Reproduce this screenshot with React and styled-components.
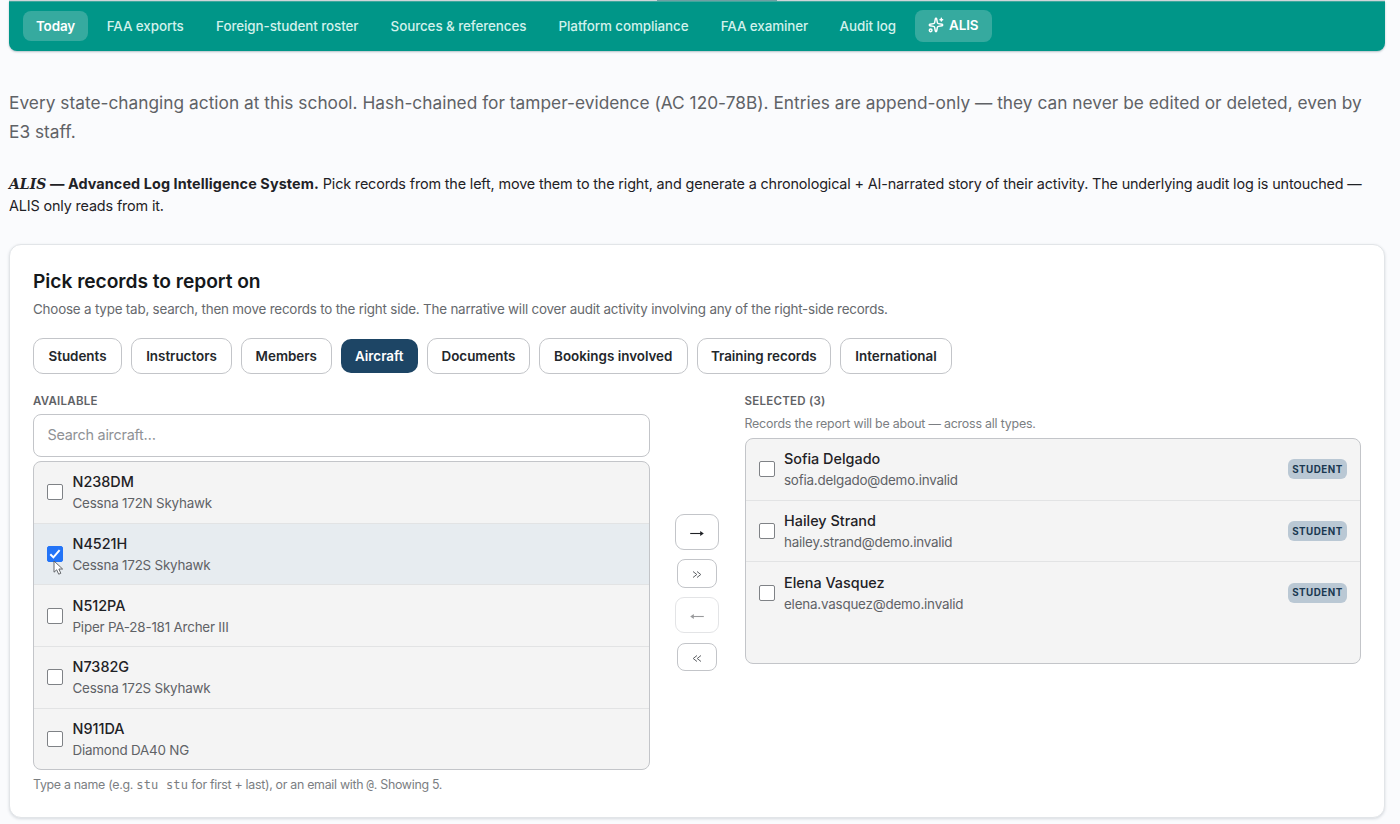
import styled, { createGlobalStyle } from "styled-components";

const GlobalStyle = createGlobalStyle`
  * {
    box-sizing: border-box;
  }

  body {
    margin: 0;
    height: 824px;
    overflow: hidden;
    background-color: #fafbfd;
    color: #1f2226;
    font-family: Inter, "Liberation Sans", sans-serif;
  }

  button,
  input {
    font-family: inherit;
  }
`;

const Page = styled.div`
  position: relative;
  width: 1400px;
  height: 824px;
  padding: 0 15px 0 9px;
`;
const TopLine = styled.div`
  height: 1px;
  background-color: #d3d9dc;
  display: flex;
  padding-left: 648px;
`;
const TopLineMark = styled.div`
  width: 120px;
  height: 1px;
  background-color: #6f9fa3;
`;
const Nav = styled.nav`
  height: 50px;
  display: flex;
  align-items: center;
  gap: 6px;
  padding: 0 14px 1px;
  background-color: #009688;
  border-radius: 0 0 8px 8px;
  border-top: 1px solid #3fa79d;
  box-shadow: 0 1px 2px rgba(20, 60, 80, 0.3);
`;
const NavItem = styled.a`
  width: ${(p) => p.$w}px;
  height: ${(p) => (p.$icon ? 32 : 30)}px;
  display: flex;
  align-items: center;
  justify-content: center;
  gap: 5px;
  padding-bottom: ${(p) => (p.$icon ? 3 : 1)}px;
  border-radius: 8px;
  font-size: 13.4px;
  font-weight: ${(p) => (p.$active ? 600 : 500)};
  letter-spacing: -0.08px;
  white-space: nowrap;
  color: ${(p) => (p.$active ? "#fff" : "#d2f1ec")};
  background-color: ${(p) => (p.$active ? "#36aa9f" : "transparent")};
`;
const Lead = styled.p`
  margin: 38px 0 0;
  font-size: 17.3px;
  line-height: 28.5px;
  color: #5f6266;
  white-space: nowrap;
  letter-spacing: 0.015px;
`;
const Intro = styled.p`
  margin: 27px 0 0;
  font-size: 14.4px;
  line-height: 22px;
  letter-spacing: -0.15px;
  white-space: nowrap;
`;
const IntroTitle = styled.strong`
  font-weight: 700;
  letter-spacing: 0.1px;
`;
const Brand = styled.em`
  font-family: "DejaVu Serif", serif;
  font-weight: 700;
  font-size: 14px;
  letter-spacing: 0;
`;
const Card = styled.section`
  margin-top: 27px;
  height: 574px;
  padding: 23px;
  background-color: #fff;
  border: 1px solid #e2e5e8;
  border-radius: 12px;
  box-shadow: 0 1px 3px rgba(30, 50, 70, 0.16);
`;
const CardTitle = styled.h2`
  margin: 0;
  font-size: 19.2px;
  line-height: 26px;
  font-weight: 600;
  color: #15181b;
  letter-spacing: -0.04px;
`;
const CardText = styled.p`
  margin: 5px 0 0;
  font-size: 13.4px;
  line-height: 20px;
  color: #66696d;
  letter-spacing: -0.2px;
`;
const Tabs = styled.div`
  display: flex;
  align-items: center;
  gap: 9px;
  height: 36px;
  margin-top: 19px;
`;
const Tab = styled.button`
  width: ${(p) => p.$w}px;
  height: ${(p) => (p.$active ? 34 : 36)}px;
  padding: 0 0 1px;
  border-radius: 10px;
  border: ${(p) => (p.$active ? "none" : "1px solid #c3c5c9")};
  background-color: ${(p) => (p.$active ? "#1d4565" : "#fff")};
  color: ${(p) => (p.$active ? "#fff" : "#24272b")};
  font-size: 13.4px;
  font-weight: 600;
  white-space: nowrap;
`;
const Columns = styled.div`
  display: grid;
  grid-template-columns: 616.5px 44px 616.5px;
  column-gap: 25.5px;
  margin-top: 18px;
`;
const Column = styled.div`
  display: flex;
  flex-direction: column;
`;
const Label = styled.div`
  padding-top: 1px;
  font-size: 11.5px;
  line-height: 16px;
  font-weight: 600;
  color: #5f6266;
  letter-spacing: 0.25px;
`;
const Search = styled.input`
  width: 100%;
  height: 43px;
  margin: 5px 0 4px;
  padding: 0 14px 2px 13.5px;
  border: 1px solid #c3c5c9;
  border-radius: 8px;
  background-color: #fff;
  font-size: 14.4px;
  letter-spacing: -0.25px;

  &::placeholder {
    color: #8f9296;
  }
`;
const List = styled.div`
  height: ${(p) => p.$h}px;
  border: 1px solid #c3c5c9;
  border-radius: 8px;
  background-color: #f4f4f4;
  overflow: hidden;
`;
const Row = styled.label`
  height: 61.68px;
  display: flex;
  align-items: center;
  gap: 9px;
  padding: 0 13px;
  border-bottom: 1px solid ${(p) => (p.$last ? "transparent" : "#e2e3e4")};
  background-color: ${(p) => (p.$checked ? "#e7ecf0" : "transparent")};
`;
const Box = styled.span`
  width: 16px;
  height: 16px;
  flex: none;
  display: flex;
  align-items: center;
  justify-content: center;
  border: 1px solid ${(p) => (p.$checked ? "#2374f7" : "#7f8286")};
  border-radius: 2px;
  background-color: ${(p) => (p.$checked ? "#2374f7" : "#fff")};
`;
const RowText = styled.div`
  flex: 1;
  padding-left: 0.5px;
  white-space: nowrap;
`;
const RowName = styled.div`
  font-size: 14.4px;
  line-height: 22px;
  font-weight: 500;
`;
const RowSub = styled.div`
  font-size: 13.4px;
  line-height: 20px;
  color: #5f6266;
  letter-spacing: -0.2px;
`;
const Badge = styled.span`
  width: 59px;
  height: 20px;
  display: flex;
  align-items: center;
  justify-content: center;
  border-radius: 6px;
  background-color: #bac8d4;
  color: #1b3851;
  font-size: 9.8px;
  font-weight: 700;
  letter-spacing: 0.5px;
`;
const Moves = styled.div`
  display: flex;
  flex-direction: column;
  align-items: center;
  gap: 9.3px;
  padding-top: 122px;
`;
const Move = styled.button`
  width: ${(p) => (p.$small ? 40 : 44)}px;
  height: ${(p) => (p.$small ? 28.8 : 36)}px;
  padding: ${(p) => (p.$small ? 1 : 2)}px 0 0;
  display: flex;
  align-items: center;
  justify-content: center;
  border: 1px solid #c3c5c9;
  border-radius: ${(p) => (p.$small ? 8 : 9)}px;
  background-color: #fff;
  color: ${(p) => (p.$small ? "#5f6266" : "#1f2226")};
  opacity: ${(p) => (p.$disabled ? 0.45 : 1)};
`;
const Hint = styled.div`
  font-size: 12.4px;
  line-height: 18px;
  color: #7b7e82;
  white-space: nowrap;
  letter-spacing: -0.2px;
`;
const SearchHint = styled(Hint)`
  margin-top: 6px;
  letter-spacing: -0.3px;
`;
const SelectedHint = styled(Hint)`
  margin: 6px 0 5px;
`;
const Code = styled.code`
  font-family: "DejaVu Sans Mono", monospace;
  font-size: 12px;
  letter-spacing: 0.2px;
`;
const Cursor = styled.svg`
  position: absolute;
  left: 53px;
  top: 560px;
`;

const navItems = [
  { text: "Today", w: 65, active: true },
  { text: "FAA exports", w: 102.5 },
  { text: "Foreign-student roster", w: 169.5 },
  { text: "Sources & references", w: 161 },
  { text: "Platform compliance", w: 157 },
  { text: "FAA examiner", w: 113 },
  { text: "Audit log", w: 81.5 },
];

const tabs = [
  { text: "Students", w: 89 },
  { text: "Instructors", w: 101 },
  { text: "Members", w: 90.5 },
  { text: "Aircraft", w: 77.5, active: true },
  { text: "Documents", w: 103 },
  { text: "Bookings involved", w: 148.5 },
  { text: "Training records", w: 134.5 },
  { text: "International", w: 112 },
];

const aircraft = [
  { name: "N238DM", sub: "Cessna 172N Skyhawk" },
  { name: "N4521H", sub: "Cessna 172S Skyhawk", checked: true },
  { name: "N512PA", sub: "Piper PA-28-181 Archer III" },
  { name: "N7382G", sub: "Cessna 172S Skyhawk" },
  { name: "N911DA", sub: "Diamond DA40 NG" },
];

const students = [
  { name: "Sofia Delgado", sub: "sofia.delgado@demo.invalid" },
  { name: "Hailey Strand", sub: "hailey.strand@demo.invalid" },
  { name: "Elena Vasquez", sub: "elena.vasquez@demo.invalid" },
];

function Sparkles() {
  return (
    <svg width="16" height="16" viewBox="0 0 24 24" fill="none" stroke="currentColor" strokeWidth="2.2" strokeLinecap="round" strokeLinejoin="round">
      <path d="M11.017 2.814a1 1 0 0 1 1.966 0l1.051 5.558a2 2 0 0 0 1.594 1.594l5.558 1.051a1 1 0 0 1 0 1.966l-5.558 1.051a2 2 0 0 0-1.594 1.594l-1.051 5.558a1 1 0 0 1-1.966 0l-1.051-5.558a2 2 0 0 0-1.594-1.594l-5.558-1.051a1 1 0 0 1 0-1.966l5.558-1.051a2 2 0 0 0 1.594-1.594z" />
      <path d="M20 2v4M22 4h-4" />
      <circle cx="4" cy="20" r="2" />
    </svg>
  );
}

function Arrow({ left }) {
  return (
    <svg width="16" height="10" viewBox="0 0 16 10" transform={left ? "scale(-1 1)" : undefined}>
      <path d="M1.2 5.5H13" stroke="currentColor" strokeWidth="1.1" fill="none" />
      <path d="M11.2 3L14.8 5.5L11.2 8z" fill="currentColor" />
    </svg>
  );
}

function Chevrons({ left }) {
  return (
    <svg width="10" height="8" viewBox="0 0 10 8" transform={left ? "scale(-1 1)" : undefined} fill="none" stroke="currentColor">
      <path d="M1 1.5L4.8 4.5L1 7.5M5 1.5L8.8 4.5L5 7.5" />
    </svg>
  );
}

function RecordRow({ record, last, badge }) {
  return (
    <Row $checked={record.checked} $last={last}>
      <Box $checked={record.checked}>
        {record.checked && (
          <svg width="14" height="14" viewBox="0 0 14 14" fill="none" stroke="#fff" strokeWidth="2">
            <path d="M2.3 7.3L5.4 10.4L11.6 3.2" />
          </svg>
        )}
      </Box>
      <RowText>
        <RowName>{record.name}</RowName>
        <RowSub>{record.sub}</RowSub>
      </RowText>
      {badge && <Badge>{badge}</Badge>}
    </Row>
  );
}

function App() {
  return (
    <Page>
      <GlobalStyle />
      <TopLine>
        <TopLineMark />
      </TopLine>
      <Nav>
        {navItems.map((item) => (
          <NavItem key={item.text} $w={item.w} $active={item.active}>
            {item.text}
          </NavItem>
        ))}
        <NavItem $w={77.5} $active $icon>
          <Sparkles />
          ALIS
        </NavItem>
      </Nav>
      <Lead>
        Every state-changing action at this school. Hash-chained for tamper-evidence (AC 120-78B). Entries are append-only — they can never be edited or deleted, even by
        <br />
        E3 staff.
      </Lead>
      <Intro>
        <Brand>ALIS</Brand>
        <IntroTitle> — Advanced Log Intelligence System.</IntroTitle> Pick records from the left, move them to the right, and generate a chronological + AI-narrated story of their activity. The underlying audit log is untouched —
        <br />
        ALIS only reads from it.
      </Intro>
      <Card>
        <CardTitle>Pick records to report on</CardTitle>
        <CardText>
          Choose a type tab, search, then move records to the right side. The narrative will cover audit activity involving any of the right-side records.
        </CardText>
        <Tabs>
          {tabs.map((tab) => (
            <Tab key={tab.text} $w={tab.w} $active={tab.active}>
              {tab.text}
            </Tab>
          ))}
        </Tabs>
        <Columns>
          <Column>
            <Label>AVAILABLE</Label>
            <Search placeholder="Search aircraft…" />
            <List $h={309}>
              {aircraft.map((record, index) => (
                <RecordRow key={record.name} record={record} last={index === aircraft.length - 1} />
              ))}
            </List>
            <SearchHint>
              Type a name (e.g. <Code>stu stu</Code> for first + last), or an email with <Code>@</Code>. Showing 5.
            </SearchHint>
          </Column>
          <Moves>
            <Move>
              <Arrow />
            </Move>
            <Move $small>
              <Chevrons />
            </Move>
            <Move $disabled>
              <Arrow left />
            </Move>
            <Move $small>
              <Chevrons left />
            </Move>
          </Moves>
          <Column>
            <Label>SELECTED (3)</Label>
            <SelectedHint>Records the report will be about — across all types.</SelectedHint>
            <List $h={226}>
              {students.map((record, index) => (
                <RecordRow key={record.name} record={record} last={index === students.length - 1} badge="STUDENT" />
              ))}
            </List>
          </Column>
        </Columns>
      </Card>
      <Cursor width="12" height="16" viewBox="0 0 12 16">
        <path d="M1 1V12.2L3.7 9.8L5.7 14.2L7.8 13.3L5.9 9H9.6z" fill="#fff" stroke="#55585c" strokeWidth="0.9" />
      </Cursor>
    </Page>
  );
}

export default App;
